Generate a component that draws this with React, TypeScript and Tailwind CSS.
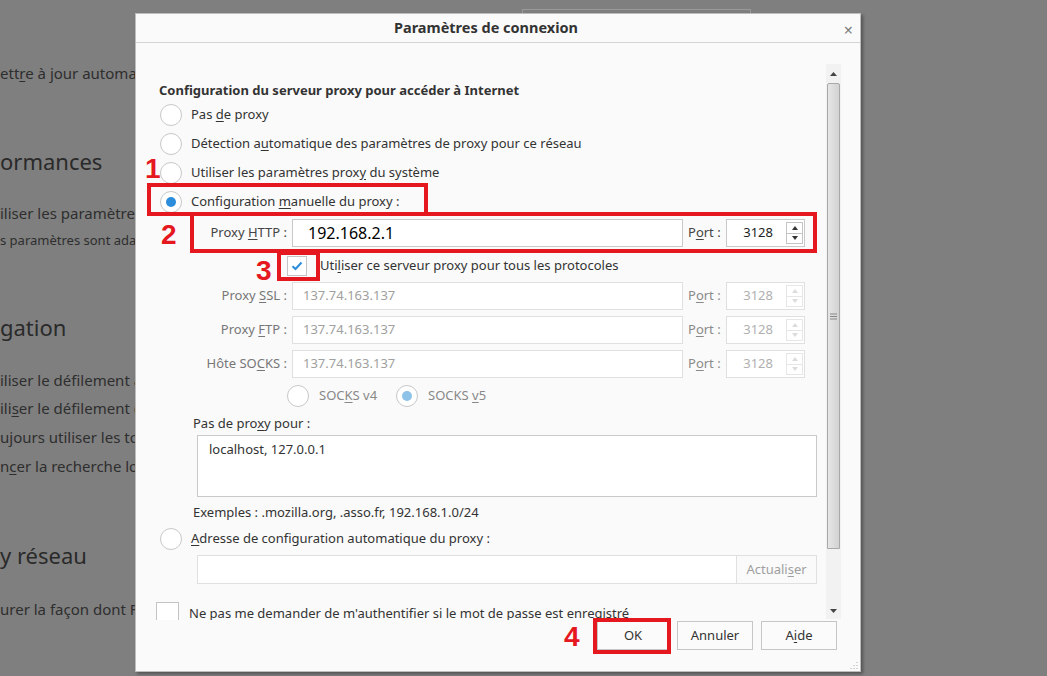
import React from 'react';

const font = { fontFamily: '"Noto Sans", "Open Sans", Arial, sans-serif' };

function Radio({ checked, disabled }: { checked?: boolean; disabled?: boolean }) {
  return (
    <span className="w-[22px] h-[22px] shrink-0 rounded-full border border-[#c8c8c8] bg-white flex items-center justify-center">
      {checked && (
        <span className={`w-[10px] h-[10px] rounded-full ${disabled ? 'bg-[#8dc3e8]' : 'bg-[#2b8ddb]'}`} />
      )}
    </span>
  );
}

function U({ children }: { children: React.ReactNode }) {
  return <span className="underline underline-offset-2">{children}</span>;
}

function Spinner({ disabled }: { disabled?: boolean }) {
  const c = disabled ? 'text-[#dcdcdc] border-[#e6e6e6]' : 'text-[#333] border-[#c4c4c4]';
  return (
    <div className={`flex flex-col w-[17px] h-[22px] border ${c}`}>
      <div className="flex-1 flex items-center justify-center border-b border-inherit">
        <svg width="6" height="4" viewBox="0 0 6 4"><path d="M3 0L6 4H0z" fill="currentColor" /></svg>
      </div>
      <div className="flex-1 flex items-center justify-center">
        <svg width="6" height="4" viewBox="0 0 6 4"><path d="M0 0H6L3 4z" fill="currentColor" /></svg>
      </div>
    </div>
  );
}

function FieldRow({ label, value, active, className }: { label: React.ReactNode; value: string; active?: boolean; className?: string }) {
  return (
    <div className={`flex items-center h-[28px] ${className ?? ''}`}>
      <div className={`w-[111px] text-right pr-[5px] ${active ? 'text-[#444]' : 'text-[#777]'}`}>{label}</div>
      <div className={`w-[391px] h-full border bg-white flex items-center ${active ? 'border-[#c9c9c9] pl-[15px] text-[16px] text-black' : 'border-[#e0e0e0] pl-[10px] text-[#a0a0a0]'}`}>
        {value}
      </div>
      <div className={`w-[43px] pl-[5px] ${active ? 'text-[#444]' : 'text-[#8a8a8a]'}`}>
        P<U>o</U>rt :
      </div>
      <div className={`w-[79px] h-full border bg-white flex items-center justify-end pr-[1px] ${active ? 'border-[#c9c9c9] text-[#222]' : 'border-[#e0e0e0] text-[#b0b0b0]'}`}>
        <span className="mr-[13px]">3128</span>
        <Spinner disabled={!active} />
      </div>
    </div>
  );
}

function RedBox({ className }: { className: string }) {
  return <div className={`absolute border-[4px] border-[#e5171f] ${className}`} />;
}

function RedNum({ n, className }: { n: string; className: string }) {
  return (
    <div className={`absolute text-[28px] leading-none font-bold text-[#e5171f] ${className}`} style={{ fontFamily: '"Liberation Sans", Arial, sans-serif' }}>
      {n}
    </div>
  );
}

export default function App() {
  return (
    <div className="relative w-[1047px] h-[676px] overflow-hidden bg-[#7f7f7f] text-[#2e2e2e]" style={font}>
      {/* page derrière la boîte de dialogue */}
      <div className="absolute left-0 top-[62px] text-[15px] leading-[22px]">ett<U>r</U>e à jour automatiquement</div>
      <div className="absolute left-0 top-[146px] text-[22px] leading-[30px] text-[#2a2a2a]">ormances</div>
      <div className="absolute left-0 top-[202px] text-[15px] leading-[22px]">iliser les paramètres</div>
      <div className="absolute left-0 top-[231px] text-[13px] leading-[18px]">s paramètres sont adaptés</div>
      <div className="absolute left-0 top-[312px] text-[22px] leading-[30px] text-[#2a2a2a]">gation</div>
      <div className="absolute left-0 top-[369px] text-[15px] leading-[22px]">iliser le défilement automatique</div>
      <div className="absolute left-0 top-[397px] text-[15px] leading-[22px]">ili<U>s</U>er le défilement doux</div>
      <div className="absolute left-0 top-[426px] text-[15px] leading-[22px]">ujours utiliser les touches</div>
      <div className="absolute left-0 top-[455px] text-[15px] leading-[22px]">n<U>c</U>er la recherche lorsque</div>
      <div className="absolute left-0 top-[540px] text-[22px] leading-[30px] text-[#2a2a2a]">y réseau</div>
      <div className="absolute left-0 top-[598px] text-[15px] leading-[22px]">urer la façon dont Firefox</div>
      <div className="absolute left-[522px] top-[9px] w-[229px] h-[10px] border border-[#999]" />

      {/* boîte de dialogue */}
      <div className="absolute left-[135px] top-[13px] w-[726px] h-[659px] bg-[#fafafa] border border-[#bdbdbd] shadow-[2px_2px_3px_rgba(0,0,0,0.35)] flex flex-col text-[13px] text-[#333]">
        <div className="h-[29px] shrink-0 border-b border-[#d4d4d4] flex items-center relative">
          <div className="w-full text-center pr-[24px] font-bold text-[14.5px] text-[#333]">Paramètres de connexion</div>
          <div className="absolute right-[7px] top-[4px] text-[16px] text-[#7a7a7a]">×</div>
        </div>

        <div className="flex-1 relative flex">
          <div className="flex-1 overflow-hidden h-[577px] pt-[37px]">
            <div className="pl-[23px] h-[20px] leading-[20px] font-bold">Configuration du serveur proxy pour accéder à Internet</div>
            <div className="pl-[24px] h-[29px] flex items-center gap-[9px]"><Radio /><span>Pas <U>d</U>e proxy</span></div>
            <div className="pl-[24px] h-[29px] flex items-center gap-[9px]"><Radio /><span>Détection a<U>u</U>tomatique des paramètres de proxy pour ce réseau</span></div>
            <div className="pl-[24px] h-[29px] flex items-center gap-[9px]"><Radio /><span>Utiliser les paramètres prox<U>y</U> du système</span></div>
            <div className="pl-[24px] h-[29px] flex items-center gap-[9px]"><Radio checked /><span>Configuration <U>m</U>anuelle du proxy :</span></div>

            <div className="pl-[45px]">
              <FieldRow className="mt-[3px]" active label={<>Proxy <U>H</U>TTP :</>} value="192.168.2.1" />
              <div className="h-[35px] flex items-center pl-[106px] pt-[2px]">
                <span className="w-[20px] h-[20px] border border-[#c4c4c4] bg-white flex items-center justify-center">
                  <svg width="12" height="10" viewBox="0 0 12 10"><path d="M1.5 5.2L4.5 8L10.5 1.5" fill="none" stroke="#2b8ddb" strokeWidth="2" /></svg>
                </span>
                <span className="ml-[13px]">Uti<U>l</U>iser ce serveur proxy pour tous les protocoles</span>
              </div>
              <FieldRow label={<>Proxy <U>S</U>SL :</>} value="137.74.163.137" />
              <FieldRow className="mt-[6px]" label={<>Proxy <U>F</U>TP :</>} value="137.74.163.137" />
              <FieldRow className="mt-[6px]" label={<>Hôte SO<U>C</U>KS :</>} value="137.74.163.137" />
              <div className="h-[36px] flex items-center pl-[106px] text-[#888]">
                <Radio />
                <span className="ml-[10px] w-[77px]">SOC<U>K</U>S v4</span>
                <Radio checked disabled />
                <span className="ml-[10px]">SOCKS <U>v</U>5</span>
              </div>
            </div>

            <div className="pl-[57px] h-[18px] leading-[18px]">Pas de pro<U>x</U>y pour :</div>
            <div className="ml-[61px] mt-[3px] w-[620px] h-[62px] border border-[#c9c9c9] bg-white pl-[11px] pt-[4px]">localhost, 127.0.0.1</div>
            <div className="pl-[57px] h-[32px] flex items-center">Exemples : .mozilla.org, .asso.fr, 192.168.1.0/24</div>
            <div className="pl-[24px] h-[20px] flex items-center gap-[9px]"><Radio /><span><U>A</U>dresse de configuration automatique du proxy :</span></div>
            <div className="ml-[61px] mt-[6px] w-[620px] h-[29px] flex">
              <div className="flex-1 border border-[#e0e0e0] bg-white" />
              <div className="w-[80px] border border-l-0 border-[#e0e0e0] bg-[#fafafa] text-[#a0a0a0] flex items-center justify-center">Actuali<U>s</U>er</div>
            </div>
            <div className="pl-[20px] mt-[17px] h-[24px] flex items-center">
              <span className="w-[23px] h-[23px] border border-[#c4c4c4] bg-white" />
              <span className="ml-[10px] pt-[2px]">Ne pas me demander de m'authentifier si le mot de passe est enregistré</span>
            </div>
          </div>

          {/* barre de défilement */}
          <div className="absolute left-[690px] top-[21px] w-[15px] h-[555px] bg-[#f2f2f2] flex flex-col">
            <div className="h-[19px] flex items-center justify-center text-[#444]">
              <svg width="7" height="4" viewBox="0 0 7 4"><path d="M3.5 0L7 4H0z" fill="currentColor" /></svg>
            </div>
            <div className="h-[466px] mx-[1px] border border-[#a9a9a9] rounded-t-[2px] bg-gradient-to-r from-[#e6e6e6] via-[#dcdcdc] to-[#d2d2d2] flex items-center justify-center">
              <svg width="7" height="7" viewBox="0 0 7 7"><path d="M0 1H7M0 3.5H7M0 6H7" stroke="#888" strokeWidth="1" /></svg>
            </div>
            <div className="flex-1" />
            <div className="h-[17px] flex items-center justify-center text-[#444]">
              <svg width="7" height="4" viewBox="0 0 7 4"><path d="M0 0H7L3.5 4z" fill="currentColor" /></svg>
            </div>
          </div>
        </div>

        <div className="h-[52px] shrink-0 flex justify-end gap-[8px] pr-[23px] pt-[1px]">
          <button className="w-[72px] h-[29px] border border-[#c6c6c6] bg-[#fbfbfb] text-[#333]">OK</button>
          <button className="w-[76px] h-[29px] border border-[#c6c6c6] bg-[#fbfbfb] text-[#333]">Annuler</button>
          <button className="w-[76px] h-[29px] border border-[#c6c6c6] bg-[#fbfbfb] text-[#333]">A<U>i</U>de</button>
        </div>
        <svg className="absolute right-[2px] bottom-[2px]" width="8" height="8" viewBox="0 0 8 8">
          <path d="M7 1v1M4 4v1M7 4v1M1 7v1M4 7v1M7 7v1" stroke="#aaa" strokeWidth="1" />
        </svg>
      </div>

      {/* annotations */}
      <RedNum n="1" className="left-[145px] top-[155px]" />
      <RedBox className="left-[147px] top-[183px] w-[281px] h-[33px]" />
      <RedNum n="2" className="left-[161px] top-[221px]" />
      <RedBox className="left-[190px] top-[212px] w-[627px] h-[41px]" />
      <RedNum n="3" className="left-[256px] top-[257px]" />
      <RedBox className="left-[277px] top-[251px] w-[43px] h-[30px]" />
      <RedNum n="4" className="left-[564px] top-[623px]" />
      <RedBox className="left-[593px] top-[618px] w-[78px] h-[36px]" />
    </div>
  );
}
